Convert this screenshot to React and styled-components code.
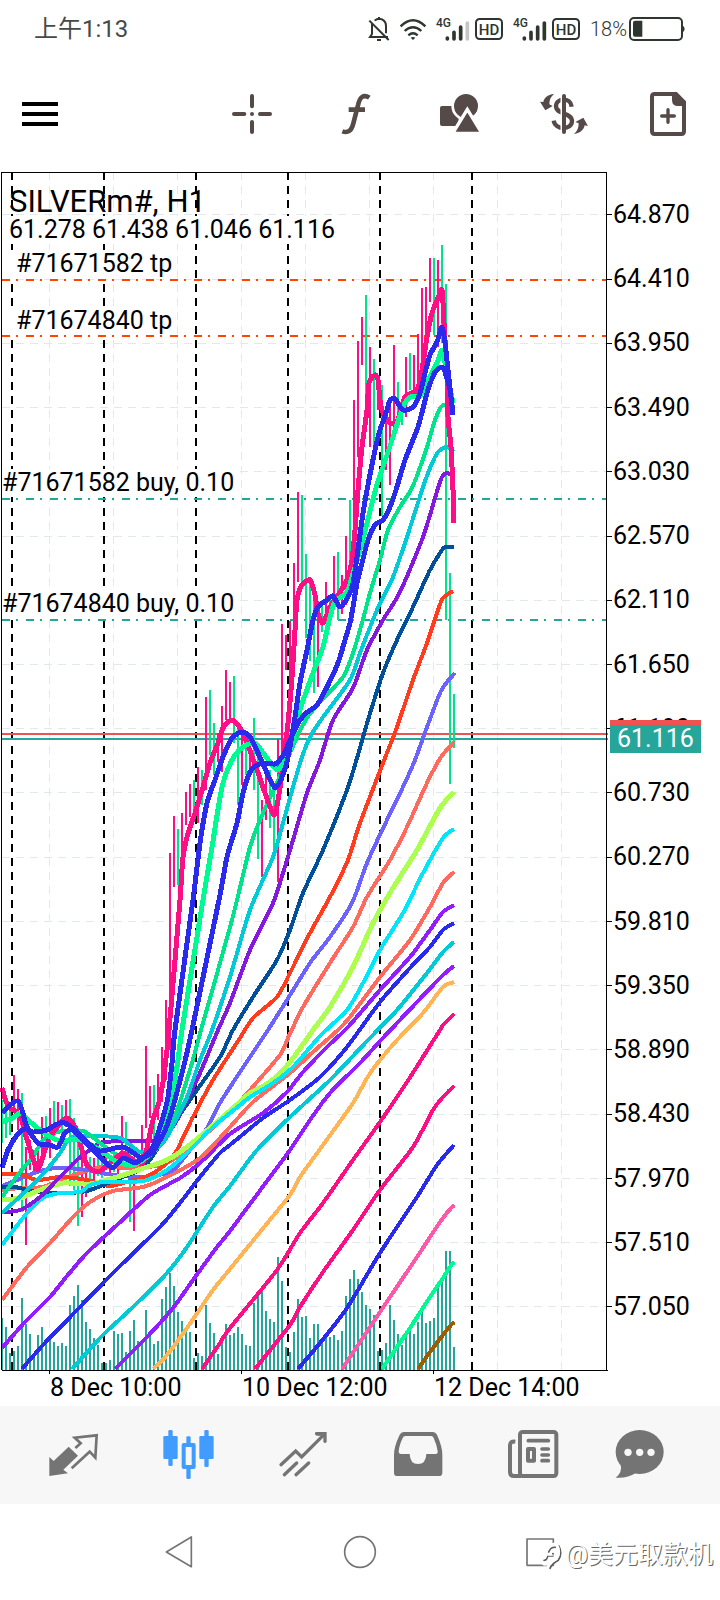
import React from 'react';
import styled, { createGlobalStyle } from 'styled-components';

const GlobalStyle = createGlobalStyle`
  * { box-sizing: border-box; }
  body {
    margin: 0;
    background: #fff;
    color: #000;
    font-family: Roboto, "Noto Sans CJK SC", sans-serif;
  }
  button { border: 0; padding: 0; background: none; font: inherit; color: inherit; cursor: pointer; }
  svg { display: block; }
`;

const Page = styled.div`
  display: flex;
  flex-direction: column;
  min-height: 100vh;
`;

/* ---------- status bar ---------- */

const StatusBar = styled.header`
  display: flex;
  align-items: center;
  justify-content: space-between;
  height: 58px;
  padding: 0 35px 0 34px;
  color: #2f362f;
`;

const Clock = styled.time`
  font-size: 24px;
  line-height: 28px;
  color: #454a45;
`;

const StatusIcons = styled.div`
  display: flex;
  align-items: center;
  gap: 10px;
`;

const StatusPair = styled.div`
  display: flex;
  align-items: center;
  gap: ${(p) => p.$gap}px;
`;

const StatusSvg = styled.svg`
  width: ${(p) => p.$w}px;
  height: 24px;
  fill: none;
  stroke: currentColor;
  text { fill: currentColor; stroke: none; font-weight: 500; }
`;

const BatteryText = styled.span`
  font-size: 20px;
  line-height: 24px;
  font-weight: 300;
`;

function Signal({ weak }) {
  return (
    <StatusPair $gap={5}>
      <StatusSvg $w={34} viewBox="227 51 102 72">
        <text x="227" y="80" fontSize="36">4G</text>
        <g strokeWidth="11" strokeLinecap="round">
          <path d="M261 114v3M281 97v20M301 81v36" />
          <path d="M321 69v48" stroke={weak ? '#c6c6c6' : 'currentColor'} />
        </g>
      </StatusSvg>
      <StatusSvg $w={28} viewBox="345 51 84 72">
        <rect x="348" y="57" width="78" height="60" rx="11" strokeWidth="6" />
        <text x="387" y="104" fontSize="45" textAnchor="middle">HD</text>
      </StatusSvg>
    </StatusPair>
  );
}

function Status() {
  return (
    <StatusBar>
      <Clock>上午1:13</Clock>
      <StatusIcons>
        <StatusSvg $w={22} viewBox="24 51 66 72" strokeWidth="6">
          <path d="M36 72V102L30 111H84M44 62Q50 56 57 56Q78 58 78 78V100M51 120H63M57 49V56M28 62L86 120" />
        </StatusSvg>
        <StatusSvg $w={26} viewBox="120 51 78 72" strokeWidth="7">
          <path d="M122 79Q159 43 196 79M134 93Q159 70 184 93M145 106Q159 94 173 106" />
          <path d="M152 113Q159 109 166 113L159 120Z" fill="currentColor" stroke="none" />
        </StatusSvg>
        <Signal weak />
        <Signal />
        <StatusPair $gap={2}>
          <BatteryText>18%</BatteryText>
          <StatusSvg $w={56} viewBox="804 51 168 72">
            <rect x="807" y="54" width="156" height="66" rx="12" strokeWidth="6" />
            <path d="M816 68Q816 62 822 62H844V110H822Q816 110 816 104ZM963 76Q971 80 971 87Q971 94 963 98Z" fill="currentColor" stroke="none" />
          </StatusSvg>
        </StatusPair>
      </StatusIcons>
    </StatusBar>
  );
}

/* ---------- toolbar ---------- */

const Toolbar = styled.nav`
  display: flex;
  align-items: stretch;
  height: 112px;
`;

const MenuButton = styled.button`
  flex: 1;
  display: flex;
  align-items: center;
  padding-left: 22px;
`;

const ToolButton = styled.button`
  width: 104px;
  display: flex;
  align-items: center;
  justify-content: center;
  color: #554a47;
`;

const ToolSvg = styled.svg`
  width: 48px;
  height: 48px;
  fill: none;
  stroke: currentColor;
  stroke-width: 12px;
`;

const tools = [
  {
    name: 'Crosshair',
    box: '684 270 144 144',
    art: (
      <g strokeLinecap="round">
        <path d="M756 288V319M756 366V396M702 342H733M780 342H810" />
        <circle cx="756" cy="342" r="6" fill="currentColor" stroke="none" />
      </g>
    ),
  },
  {
    name: 'Indicators',
    box: '-84 270 144 144',
    art: <path d="M28 293C10 281 -1 292 -6 316L-20 370C-26 393 -36 400 -53 394M-34 329H15" strokeWidth="14" />,
  },
  {
    name: 'Objects',
    box: '228 270 144 144',
    art: (
      <g fill="currentColor">
        <rect x="240" y="318" width="56" height="60" rx="6" stroke="none" />
        <circle cx="318" cy="318" r="40" stroke="#fff" strokeWidth="8" />
        <path d="M322 328L278 400H366Z" stroke="#fff" strokeWidth="10" />
      </g>
    ),
  },
  {
    name: 'Trade',
    box: '540 270 144 144',
    art: (
      <>
        <path d="M635 320C632 291 588 293 588 319C588 344 636 337 636 363C636 391 586 391 581 362" strokeWidth="13" />
        <path d="M605 276V408" stroke="#fff" strokeWidth="7" />
        <path d="M612 288V396" strokeLinecap="round" />
        <g fill="currentColor" stroke="none">
          <path d="M582 282C562 284 552 294 550 306L540 305L556 331L578 318L568 313C568 300 572 290 582 282Z" />
          <path d="M642 402C662 400 672 388 674 376L684 378L670 353L646 366L656 370C656 384 652 394 642 402Z" />
        </g>
      </>
    ),
  },
  {
    name: 'New order',
    box: '852 270 144 144',
    art: (
      <>
        <path d="M884 282H948L972 306V394Q972 402 964 402H884Q876 402 876 394V290Q876 282 884 282Z" />
        <path d="M936 280V300Q936 318 954 318H976V306L950 278Z" fill="currentColor" stroke="none" />
        <path d="M924 329V367M905 348H943" strokeLinecap="round" strokeWidth="10" />
      </>
    ),
  },
];

/* ---------- chart ---------- */

const Chart = styled.main`
  padding-top: 2px;
`;

const ChartBody = styled.div`
  display: grid;
  grid-template-columns: 612fr 108fr;
`;

const Plot = styled.section`
  position: relative;
`;

const PlotSvg = styled.svg`
  width: 100%;
  height: auto;
  fill: none;
`;

const SymbolInfo = styled.div`
  position: absolute;
  top: 16px;
  left: 9px;
`;

const SymbolName = styled.h1`
  margin: 0;
  font-size: 31px;
  line-height: 28px;
  font-weight: 400;
`;

const Quotes = styled.p`
  margin: 0;
  font-size: 25px;
  line-height: 28px;
  background: #fff;
`;

const OrderTag = styled.span`
  position: absolute;
  left: 2px;
  top: ${(p) => p.$top}%;
  padding-left: ${(p) => (p.$inset ? 14 : 0)}px;
  font-size: 25px;
  line-height: 28px;
  white-space: nowrap;
  background: #fff;
`;

const PriceAxis = styled.aside`
  position: relative;
  display: flex;
  flex-direction: column;
  justify-content: space-between;
  padding: 28px 0 52px 1px;
  font-size: 25px;
  line-height: 30px;
`;

const PriceBadge = styled.strong`
  position: absolute;
  top: 45.6%;
  left: -2px;
  padding: 0 7px;
  border-top: 5px solid #ef5350;
  background: #26a69a;
  color: #fff;
  font-weight: 400;
  line-height: 28px;
`;

const TimeAxis = styled.div`
  display: grid;
  grid-template-columns: 192fr 192fr 286fr;
  padding-left: 50px;
  height: 32px;
  font-size: 25px;
  line-height: 28px;
  white-space: nowrap;
`;

const pink = '#fb0f84';
const green = '#00e38a';
const blue = '#2a2aec';
const spring = '#00fa92';
const teal = '#00cad6';
const violet = '#8418dd';
const purple = '#931dff';
const salmon = '#ff6a5e';

// Moving averages, slowest first so that the faster ones lie on top.
const averages = [
  ['#a05a00', 4, '418,1369 430,1352 443,1335 452,1324 455,1323'],
  [spring, 4, '382,1369 410,1328 430,1297 443,1278 452,1264 455,1263'],
  ['#ff58aa', 4, '342,1369 380,1312 417,1257 440,1222 452,1207 455,1206'],
  [blue, 4, '298,1369 320,1343 347,1308 380,1253 417,1197 437,1165 454,1145'],
  [pink, 4, '255,1369 290,1325 300,1307 323,1272 353,1230 380,1190 413,1147 433,1110 443,1097 454,1086'],
  [pink, 4, '202,1369 220,1343 230,1328 277,1270 300,1233 323,1203 353,1160 380,1122 407,1082 440,1030 443,1025 454,1014'],
  ['#ffb554', 4, '153,1369 167,1355 187,1328 213,1290 230,1269 260,1232 290,1195 300,1177 323,1145 353,1103 367,1078 380,1060 398,1039 423,1013 443,987 454,982'],
  [purple, 4, '115,1369 147,1337 173,1308 193,1280 217,1247 230,1231 270,1177 290,1150 310,1120 330,1093 360,1063 382,1039 417,1002 443,975 454,966'],
  [teal, 4, '72,1369 103,1335 133,1307 167,1273 187,1247 213,1207 230,1186 257,1150 290,1117 330,1080 368,1040 397,1010 427,973 443,952 454,942'],
  [blue, 4, '22,1369 43,1345 80,1307 113,1273 160,1227 180,1203 200,1177 220,1153 230,1145 263,1118 290,1100 320,1077 347,1047 380,1002 410,968 430,947 443,930 454,923'],
  [purple, 4, '2,1348 25,1322 50,1297 67,1276 87,1253 117,1225 150,1195 180,1178 200,1163 230,1134 263,1113 287,1092 303,1072 327,1047 348,1027 380,990 410,957 430,930 443,912 454,905'],
  [salmon, 4, '2,1300 27,1267 50,1243 73,1217 90,1202 113,1191 143,1187 167,1177 200,1158 230,1127 253,1102 290,1073 313,1052 338,1030 350,1017 380,977 410,940 430,907 443,883 454,872'],
  [salmon, 4, '2,1190 20,1188 43,1187 60,1180 83,1172 103,1167 133,1168 160,1165 177,1157 207,1133 240,1101 250,1090 280,1055 288,1038 303,1007 330,963 353,927 367,897 390,860 407,827 427,783 441,757 454,742'],
  ['#6c63ff', 4, '2,1186 17,1180 37,1172 57,1168 87,1170 113,1175 147,1177 173,1170 190,1150 207,1128 220,1103 240,1072 250,1057 268,1030 287,1000 310,963 330,937 352,903 367,863 387,820 403,787 415,760 427,727 440,693 447,682 455,673'],
  ['#ff3c1e', 4, '2,1174 20,1174 37,1180 60,1177 87,1180 110,1186 133,1180 150,1175 167,1163 177,1150 193,1117 213,1080 240,1038 253,1018 277,997 290,973 310,933 330,897 348,860 360,823 385,758 397,727 413,680 427,643 438,610 443,598 453,591'],
  ['#004f9b', 4, '2,1187 15,1187 33,1191 60,1193 87,1191 120,1178 143,1168 158,1148 167,1133 197,1090 220,1057 233,1030 253,997 277,960 290,930 303,893 323,850 347,790 357,758 368,720 383,673 397,640 413,607 430,570 442,550 445,547 454,547'],
  ['#adff4f', 5, '2,1200 20,1198 40,1190 63,1183 90,1184 117,1177 147,1167 167,1160 187,1147 217,1122 240,1102 250,1093 270,1082 290,1062 313,1030 330,1007 353,967 373,923 393,888 417,850 440,808 454,792'],
  ['#00e6f6', 4, '2,1245 27,1213 43,1198 60,1193 80,1192 90,1185 103,1182 143,1181 167,1170 187,1153 213,1127 240,1105 250,1097 273,1083 293,1067 320,1036 347,1010 363,983 380,950 403,913 423,873 443,838 454,829'],
  [violet, 4, '2,1212 20,1210 40,1197 60,1177 77,1160 90,1150 103,1142 147,1141 163,1138 177,1120 200,1073 218,1030 230,1003 250,950 273,903 283,873 293,840 307,793 320,760 333,720 353,688 367,650 383,620 400,592 423,537 438,488 442,477 447,473 454,477'],
  [teal, 4, '2,1213 27,1190 43,1174 60,1153 70,1138 87,1136 120,1138 140,1152 157,1148 167,1137 187,1097 200,1060 212,1030 230,977 250,910 273,857 283,823 293,787 302,757 310,737 323,717 350,680 360,653 377,610 393,577 407,537 423,487 430,468 438,452 447,447 454,452'],
  [green, 4, '2,1197 20,1172 33,1157 43,1140 57,1132 83,1131 100,1143 117,1155 133,1162 150,1155 163,1137 177,1110 192,1063 201,1030 232,920 250,847 263,813 275,787 287,760 297,737 307,718 320,702 343,677 353,653 362,623 370,593 380,560 388,530 400,507 411,490 418,473 427,447 435,420 443,405 452,411'],
  [pink, 5, '2,1088 8,1106 20,1115 25,1133 32,1155 38,1170 45,1150 52,1134 66,1118 75,1127 80,1143 87,1165 98,1172 110,1163 123,1153 133,1160 143,1163 148,1143 153,1120 159,1102 163,1082 167,1050 169,1030 175,960 180,900 183,857 187,837 195,813 203,787 210,763 218,743 223,728 232,720 240,728 247,743 257,770 265,793 274,815 278,800 282,773 288,723 292,677 295,630 297,600 302,585 310,580 315,595 318,613 323,623 330,607 338,595 347,580 352,560 355,530 358,490 362,447 367,410 369,383 375,375 378,380 380,400 383,413 390,423 397,422 405,397 417,390 422,370 427,337 432,313 438,298 442,290 444,323 447,377 448,417 451,447 453,490 454,523'],
  [spring, 5, '2,1122 13,1118 20,1113 28,1120 40,1130 57,1140 80,1140 100,1150 117,1162 133,1165 147,1157 157,1147 163,1130 172,1097 178,1060 182,1030 203,900 212,847 222,787 232,760 243,747 255,743 263,753 277,770 283,763 290,750 300,710 313,673 323,647 330,617 335,602 347,592 352,577 360,550 367,523 376,488 383,467 393,437 403,407 410,397 420,396 428,380 437,363 442,350 445,363 453,403'],
  [blue, 5, '2,1168 8,1150 17,1135 25,1129 33,1132 47,1130 57,1124 65,1123 75,1130 87,1142 100,1151 123,1147 140,1157 152,1153 160,1140 168,1123 182,1073 192,1030 219,900 227,857 237,823 243,793 250,772 257,765 268,763 275,764 282,757 288,745 297,725 305,714 317,705 327,687 338,663 345,640 350,623 353,607 357,583 362,563 368,540 375,525 383,520 390,507 396,490 405,460 418,427 427,393 435,372 442,367 445,372 450,390 453,413'],
  [blue, 5, '2,1113 10,1105 18,1101 22,1110 27,1127 38,1143 50,1145 58,1147 65,1133 72,1130 80,1137 93,1150 103,1160 113,1168 123,1158 135,1163 143,1158 153,1147 163,1117 168,1097 172,1063 175,1030 193,900 200,843 207,803 215,780 223,757 232,738 242,732 250,737 258,753 267,773 275,788 282,777 288,757 295,717 300,683 307,650 313,620 318,607 327,600 333,596 340,607 348,597 353,583 357,557 362,520 367,490 375,450 380,430 387,410 390,400 395,399 403,410 413,407 420,393 425,373 430,355 437,342 442,327 445,343 448,370 453,415'],
];

// Catmull-Rom spline through the sampled values of one average.
function curve(text) {
  const p = text.split(' ').map((s) => s.split(',').map(Number));
  let d = `M${p[0]}`;
  for (let i = 0; i < p.length - 1; i += 1) {
    const a = p[i - 1] || p[i];
    const b = p[i];
    const c = p[i + 1];
    const e = p[i + 2] || c;
    d += `C${b[0] + (c[0] - a[0]) / 8} ${b[1] + (c[1] - a[1]) / 8} ${c[0] - (e[0] - b[0]) / 8} ${c[1] - (e[1] - b[1]) / 8} ${c[0]} ${c[1]}`;
  }
  return d;
}

// High and low of each bar: x, top, bottom.
const falling = [
  [2, 1100, 1143], [6, 1105, 1138], [10, 1107, 1135], [22, 1093, 1212], [46, 1116, 1145], [54, 1101, 1140],
  [62, 1105, 1140], [70, 1099, 1186], [74, 1118, 1190], [78, 1143, 1226], [90, 1157, 1188], [98, 1150, 1176],
  [102, 1150, 1178], [114, 1152, 1172], [126, 1122, 1165], [130, 1153, 1222], [138, 1150, 1172], [154, 1085, 1145],
  [178, 829, 885], [194, 780, 813], [202, 770, 805], [210, 690, 755], [214, 723, 775], [234, 676, 743],
  [238, 727, 805], [246, 737, 775], [254, 718, 790], [258, 750, 859], [270, 770, 828], [274, 793, 850],
  [302, 495, 582], [306, 554, 638], [310, 583, 661], [314, 597, 693], [322, 600, 632], [330, 595, 617],
  [338, 552, 620], [350, 500, 590], [366, 295, 417], [374, 359, 445], [382, 385, 516], [398, 382, 417],
  [402, 400, 425], [410, 353, 390], [434, 258, 335], [442, 245, 343], [446, 284, 620], [450, 573, 784], [454, 694, 748],
];
const rising = [
  [14, 1075, 1113], [18, 1089, 1130], [26, 1147, 1245], [30, 1140, 1170], [34, 1150, 1173], [38, 1143, 1173],
  [42, 1117, 1155], [50, 1108, 1158], [58, 1102, 1133], [66, 1100, 1127], [82, 1157, 1217], [86, 1153, 1197],
  [94, 1158, 1182], [106, 1152, 1170], [110, 1157, 1175], [118, 1155, 1176], [122, 1116, 1163], [134, 1157, 1231],
  [142, 1125, 1167], [146, 1046, 1128], [150, 1086, 1118], [158, 1074, 1120], [162, 1047, 1102], [166, 1000, 1080],
  [170, 853, 1050], [174, 816, 887], [182, 813, 900], [186, 792, 825], [190, 784, 817], [198, 767, 823],
  [206, 697, 790], [218, 733, 762], [222, 706, 772], [226, 670, 720], [230, 682, 718], [242, 733, 785],
  [250, 745, 768], [262, 800, 877], [266, 773, 820], [278, 739, 882], [282, 624, 757], [286, 635, 670],
  [290, 621, 700], [294, 563, 650], [298, 492, 582], [318, 610, 687], [326, 582, 623], [334, 556, 603],
  [342, 575, 614], [346, 536, 605], [354, 400, 560], [358, 341, 457], [362, 317, 365], [370, 347, 447],
  [378, 377, 410], [386, 410, 470], [390, 400, 485], [394, 345, 425], [406, 357, 417], [414, 355, 397],
  [418, 334, 390], [422, 288, 373], [426, 287, 347], [430, 258, 302], [438, 260, 347],
];

// Top of each volume bar, one bar every 4 units from x = 2.
const volumes = [
  1318, 1327, 1353, 1351, 1346, 1298, 1324, 1334, 1358, 1335, 1327, 1339, 1336, 1342, 1346, 1343, 1346, 1305, 1296,
  1285, 1300, 1322, 1329, 1338, 1345, 1363, 1363, 1360, 1331, 1334, 1333, 1352, 1331, 1320, 1341, 1340, 1310, 1333,
  1344, 1341, 1299, 1287, 1273, 1286, 1312, 1321, 1330, 1332, 1358, 1353, 1356, 1305, 1323, 1333, 1354, 1336, 1324,
  1335, 1333, 1327, 1334, 1345, 1346, 1303, 1293, 1287, 1311, 1319, 1322, 1257, 1281, 1347, 1352, 1332, 1299, 1317,
  1316, 1338, 1324, 1324, 1340, 1337, 1337, 1335, 1340, 1331, 1296, 1279, 1270, 1279, 1292, 1305, 1309, 1315, 1351,
  1350, 1343, 1305, 1320, 1334, 1345, 1336, 1330, 1334, 1322, 1312, 1323, 1321, 1318, 1287, 1282, 1251, 1251, 1347,
];

const bars = (list) => list.map(([x, top, bottom]) => `M${x} ${top}V${bottom}`).join('');

const prices = [
  '64.870', '64.410', '63.950', '63.490', '63.030', '62.570', '62.110', '61.650', '61.190',
  '60.730', '60.270', '59.810', '59.350', '58.890', '58.430', '57.970', '57.510', '57.050',
];
const priceY = [214, 279, 343, 407, 471, 536, 600, 664, 728, 792, 857, 921, 985, 1049, 1114, 1178, 1242, 1306];
const gridX = [49, 113, 177, 241, 305, 369, 433, 497, 561];
const dayX = [12, 104, 196, 288, 380, 472];

function ChartPanel() {
  return (
    <Chart>
      <ChartBody>
        <Plot>
          <PlotSvg viewBox="0 172 612 1202" shapeRendering="crispEdges" role="img" aria-label="SILVERm# hourly chart">
            <g stroke="#dfe9ef" strokeDasharray="8 6">
              <path d={priceY.map((y) => `M2 ${y + 0.5}H606`).join('')} />
              <path d={gridX.map((x) => `M${x + 0.5} 172V1370`).join('')} />
            </g>
            <path d={dayX.map((x) => `M${x} 172V1370`).join('')} stroke="#000" strokeWidth="2" strokeDasharray="8 6" />
            <path d={volumes.map((y, i) => `M${2 + i * 4} ${y}V1370`).join('')} stroke="#26a69a" strokeWidth="2" />
            <g strokeWidth="2">
              <path d="M2 280H606M2 336H606" stroke="#ff4500" strokeDasharray="8 6 2 8" />
              <path d="M2 499H606M2 620H606" stroke="#26a69a" strokeDasharray="8 6 2 8" />
              <path d="M2 734H608" stroke="#ef5350" />
              <path d="M2 739H608" stroke="#26a69a" />
              <path d={bars(falling)} stroke={green} />
              <path d={bars(rising)} stroke={pink} />
            </g>
            {averages.map(([color, width, points]) => (
              <path key={points} d={curve(points)} stroke={color} strokeWidth={width} strokeLinejoin="round" />
            ))}
            <path d="M1.500 1370V172.500H607M606.500 172V1370M2 1370.500H608" stroke="#000" />
            <path d={priceY.map((y) => `M607 ${y + 0.5}H612`).join('')} stroke="#000" />
            <path d="M49.500 1371V1374M241.500 1371V1374M433.500 1371V1374" stroke="#000" />
          </PlotSvg>
          <SymbolInfo>
            <SymbolName>SILVERm#, H1</SymbolName>
            <Quotes>61.278 61.438 61.046 61.116</Quotes>
          </SymbolInfo>
          <OrderTag $top={6.5} $inset>#71671582 tp</OrderTag>
          <OrderTag $top={11.2} $inset>#71674840 tp</OrderTag>
          <OrderTag $top={24.7}>#71671582 buy, 0.10</OrderTag>
          <OrderTag $top={34.8}>#71674840 buy, 0.10</OrderTag>
        </Plot>
        <PriceAxis>
          {prices.map((p) => (
            <span key={p}>{p}</span>
          ))}
          <PriceBadge>61.116</PriceBadge>
        </PriceAxis>
      </ChartBody>
      <TimeAxis>
        <span>8 Dec 10:00</span>
        <span>10 Dec 12:00</span>
        <span>12 Dec 14:00</span>
      </TimeAxis>
    </Chart>
  );
}

/* ---------- bottom tabs ---------- */

const TabBar = styled.nav`
  display: grid;
  grid-template-columns: repeat(6, 1fr);
  height: 98px;
  padding: 0 15px;
  background: #f7f7f7;
`;

const Tab = styled.button`
  display: flex;
  align-items: center;
  justify-content: center;
  color: ${(p) => (p.$active ? '#429cff' : '#747474')};
`;

const TabSvg = styled.svg`
  width: 72px;
  height: 56px;
  fill: none;
  stroke: currentColor;
`;

const tabs = [
  {
    name: 'Quotes',
    box: '111 201 216 168',
    art: (
      <>
        <path d="M148 291L161 303L206 260L234 287L190 329L204 340L148 348Z" fill="currentColor" stroke="none" />
        <path d="M226 264L242 250L224 233L290 226L286 293L269 275L215 325" strokeWidth="8" />
      </>
    ),
  },
  {
    name: 'Charts',
    active: true,
    box: '456 201 216 168',
    art: (
      <>
        <g fill="currentColor" stroke="none">
          <rect x="490" y="228" width="43" height="69" rx="4" />
          <rect x="505" y="210" width="13" height="108" rx="4" />
          <rect x="598" y="228" width="43" height="69" rx="4" />
          <rect x="613" y="210" width="13" height="111" rx="4" />
          <rect x="559" y="229" width="13" height="24" rx="4" />
          <rect x="559" y="322" width="13" height="35" rx="4" />
        </g>
        <rect x="551" y="255" width="30" height="66" strokeWidth="12" strokeLinejoin="round" />
      </>
    ),
  },
  {
    name: 'Trade',
    box: '801 201 216 168',
    art: (
      <>
        <path d="M843 314L887 273L905 291L972 224M853 344L890 309M888 344L926 309" strokeWidth="10" strokeLinecap="round" />
        <path d="M948 216H980V246Q975 252 970 246V228L950 227Q940 221 948 216Z" fill="currentColor" stroke="none" />
      </>
    ),
  },
  {
    name: 'History',
    box: '67 201 216 168',
    art: (
      <path
        fill="currentColor"
        stroke="none"
        fillRule="evenodd"
        d="M132 216H220Q228 216 232 224Q248 260 248 284V338Q248 348 238 348H113Q103 348 103 338V284Q103 260 120 224Q124 216 132 216ZM137 228Q132 228 129 234Q118 258 117 274Q117 282 124 282H150Q151 312 175 312Q199 312 200 282H228Q235 282 234 274Q232 256 222 234Q220 228 214 228Z"
      />
    ),
  },
  {
    name: 'News',
    box: '412 201 216 168',
    art: (
      <g strokeWidth="12">
        <rect x="481" y="216" width="109" height="132" rx="8" />
        <path d="M467 245Q451 243 451 256V336Q451 348 463 348H484" />
        <rect x="505" y="267" width="18" height="35" strokeLinejoin="round" />
        <path d="M506 242H566M547 267H566M547 285H566M547 302H566" strokeLinecap="round" strokeWidth="11" />
      </g>
    ),
  },
  {
    name: 'Messages',
    box: '754 201 216 168',
    art: (
      <g fill="currentColor" stroke="none">
        <ellipse cx="837" cy="276" rx="72" ry="66" />
        <path d="M780 314Q786 336 765 353Q800 356 826 338Z" />
        <g fill="#f7f7f7">
          <circle cx="802" cy="277" r="11" />
          <circle cx="837" cy="277" r="11" />
          <circle cx="871" cy="277" r="11" />
        </g>
      </g>
    ),
  },
];

/* ---------- system navigation ---------- */

const SystemNav = styled.nav`
  position: relative;
  display: grid;
  grid-template-columns: repeat(3, 1fr);
  height: 96px;
  padding: 0 12.5%;
`;

const SystemButton = styled.button`
  display: flex;
  align-items: center;
  justify-content: center;
  color: #757575;
`;

const SystemSvg = styled.svg`
  width: 36px;
  height: 36px;
  fill: none;
  stroke: currentColor;
  stroke-width: 5px;
  stroke-linejoin: round;
`;

const Watermark = styled.div`
  position: absolute;
  right: 7px;
  top: 35px;
  display: flex;
  align-items: center;
  gap: 2px;
  color: #fff;
  font-size: 25px;
  line-height: 32px;
  text-shadow: 1px 1px 0 #666;
`;

const WatermarkLogo = styled.svg`
  width: 24px;
  height: 32px;
  fill: none;
  stroke-linecap: round;
`;

export default function App() {
  return (
    <Page>
      <GlobalStyle />
      <Status />
      <Toolbar>
        <MenuButton aria-label="Menu">
          <svg width="36" height="24" viewBox="0 0 36 24" stroke="#000" strokeWidth="4">
            <path d="M0 2H36M0 12H36M0 22H36" />
          </svg>
        </MenuButton>
        {tools.map((t) => (
          <ToolButton key={t.name} aria-label={t.name}>
            <ToolSvg viewBox={t.box}>{t.art}</ToolSvg>
          </ToolButton>
        ))}
      </Toolbar>
      <ChartPanel />
      <TabBar>
        {tabs.map((t) => (
          <Tab key={t.name} $active={t.active} aria-label={t.name}>
            <TabSvg viewBox={t.box}>{t.art}</TabSvg>
          </Tab>
        ))}
      </TabBar>
      <SystemNav>
        <SystemButton aria-label="Back">
          <SystemSvg viewBox="486 521 108 108"><path d="M499 575L574 530V619Z" /></SystemSvg>
        </SystemButton>
        <SystemButton aria-label="Home">
          <SystemSvg viewBox="-54 521 108 108"><circle cx="0" cy="575" r="46" /></SystemSvg>
        </SystemButton>
        <SystemButton aria-label="Recent apps">
          <SystemSvg viewBox="486 521 108 108"><rect x="501" y="536" width="79" height="79" /></SystemSvg>
        </SystemButton>
        <Watermark>
          <WatermarkLogo viewBox="534 542 72 96">
            <path d="M546 602Q550 560 574 556Q594 560 590 590Q584 612 562 618Z" fill="#fff" />
            <g stroke="#5c5c5c" strokeWidth="5">
              <path d="M590 562Q603 585 589 606Q570 616 564 630" />
              <path d="M546 606Q556 606 558 588Q564 564 580 567M560 593H573" />
            </g>
            <g stroke="#fff" strokeWidth="9">
              <path d="M582 554Q598 585 582 602Q566 610 558 624" />
              <path d="M541 597Q552 602 551 582Q558 556 578 558M556 588H570M540 612Q546 622 556 614" />
            </g>
            <circle cx="573" cy="586" r="3" fill="#5c5c5c" />
          </WatermarkLogo>
          @美元取款机
        </Watermark>
      </SystemNav>
    </Page>
  );
}
